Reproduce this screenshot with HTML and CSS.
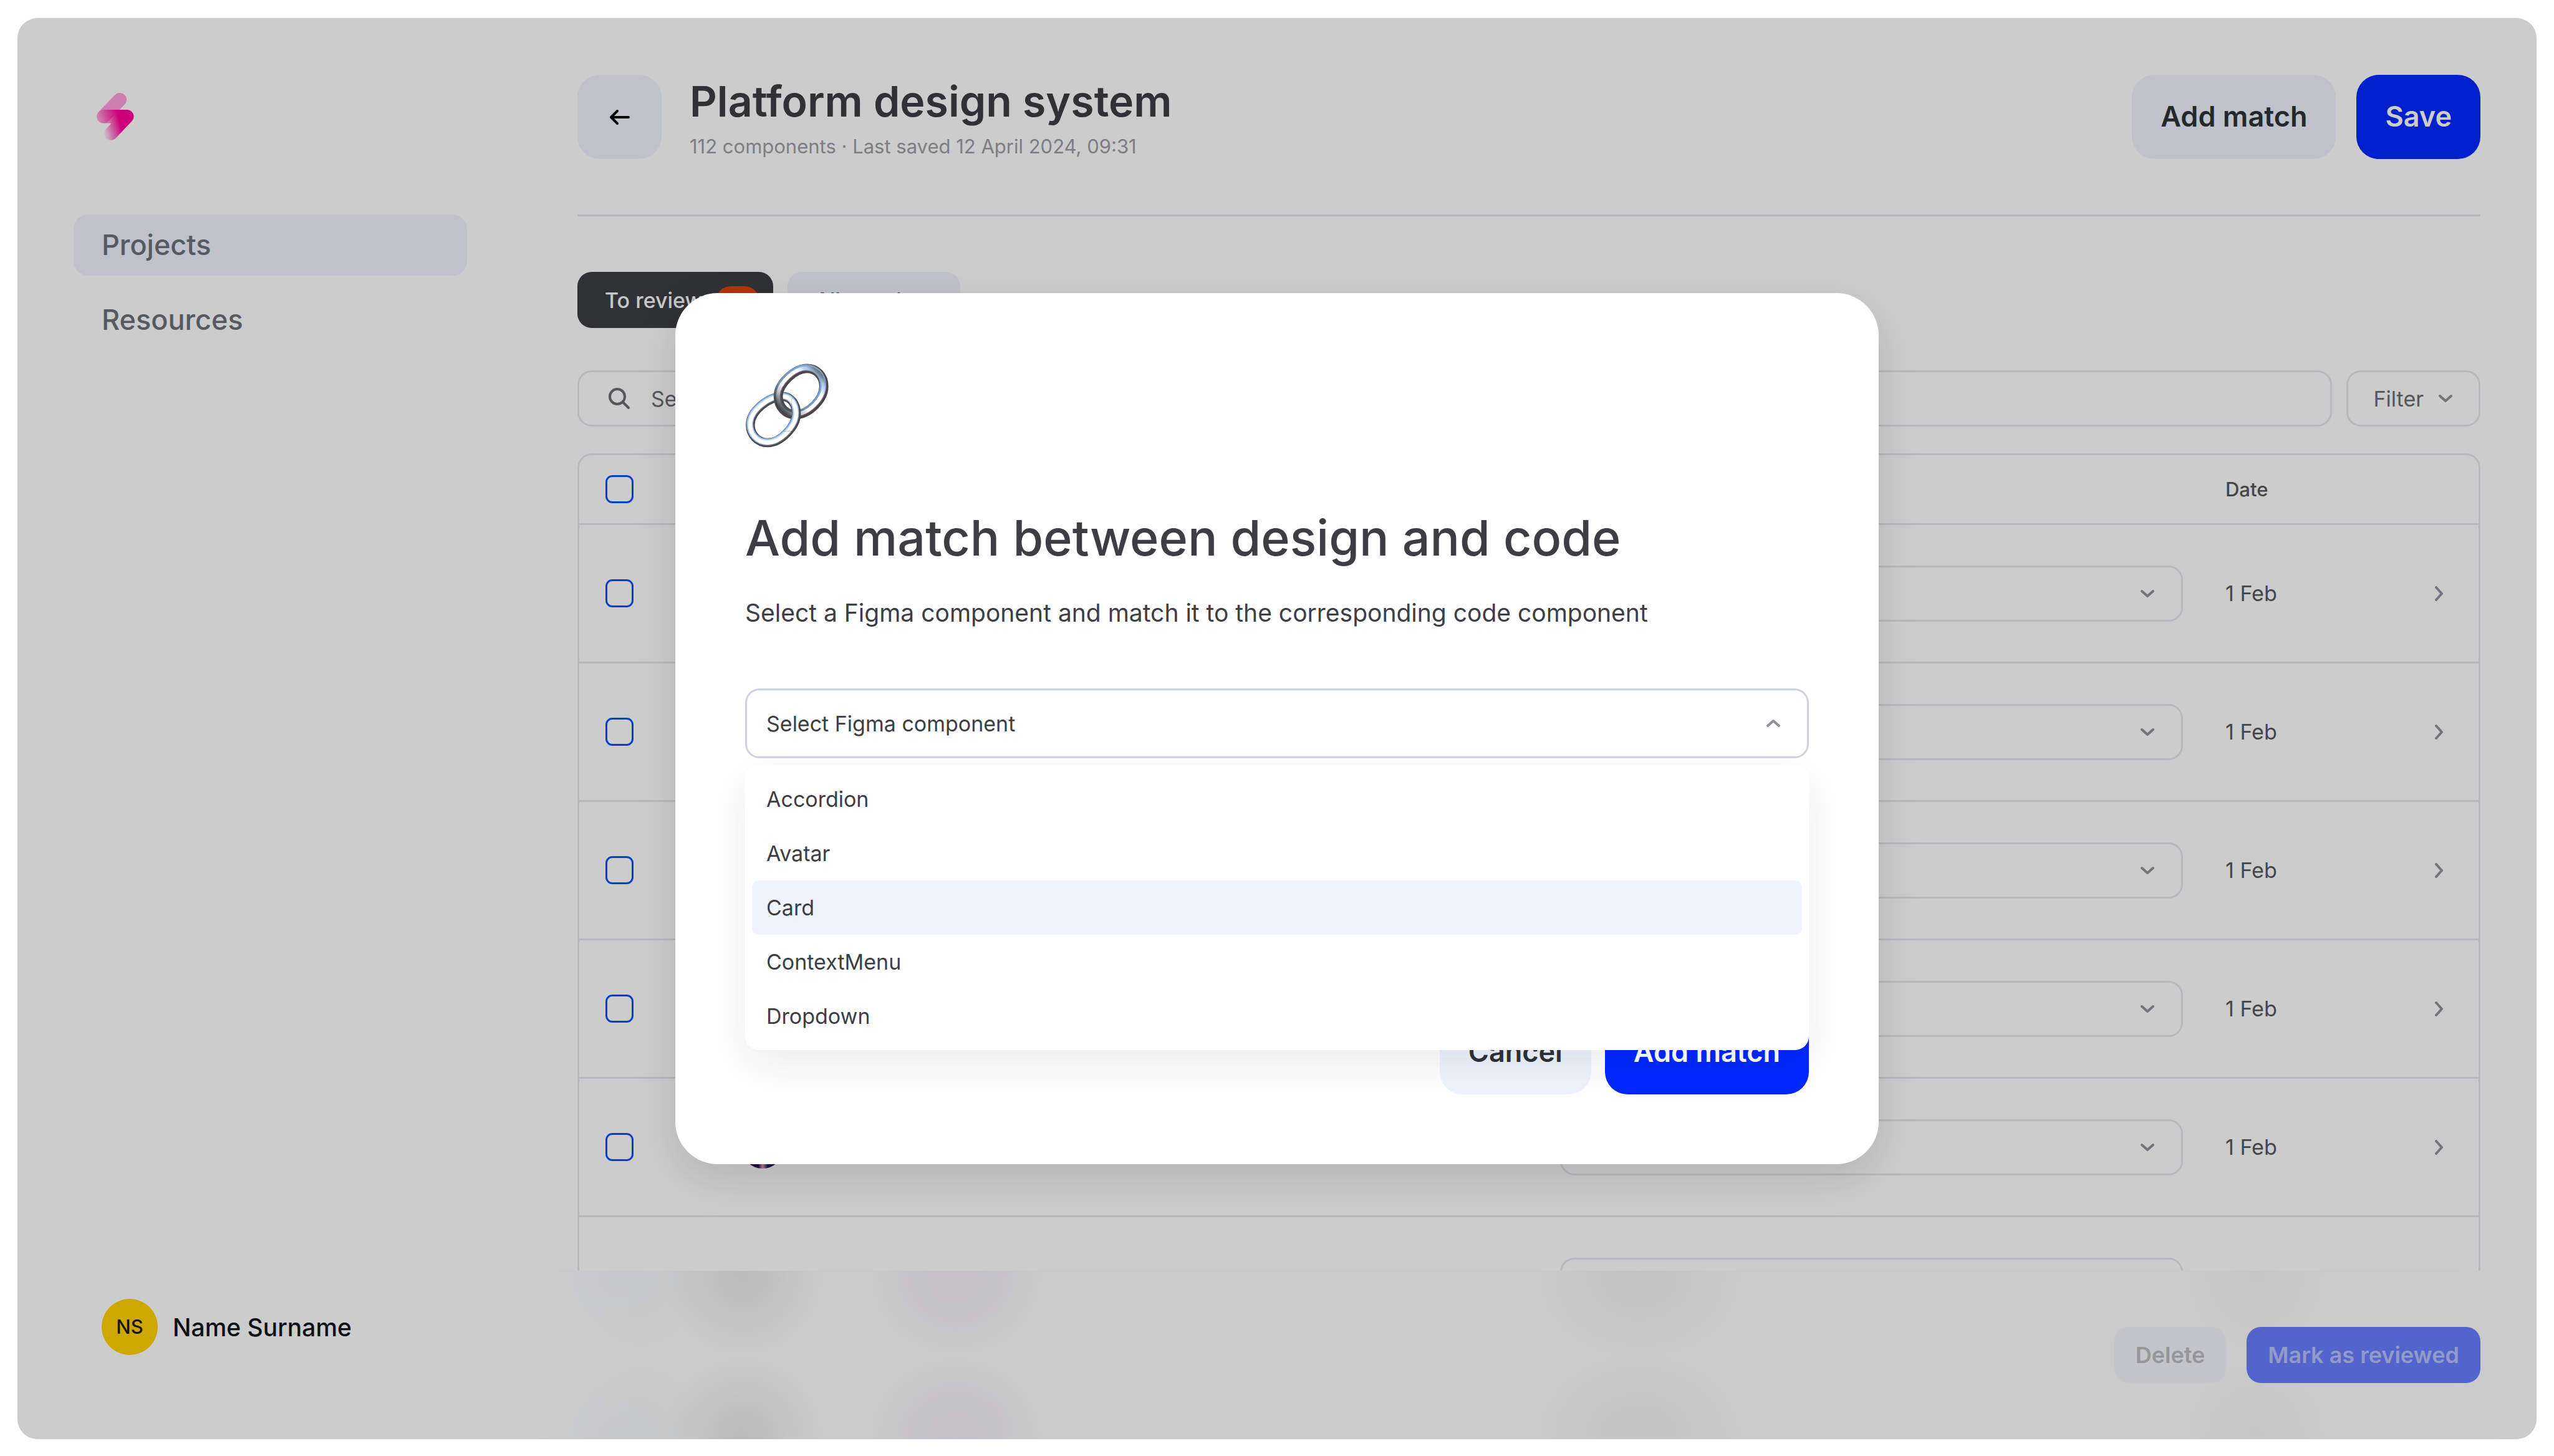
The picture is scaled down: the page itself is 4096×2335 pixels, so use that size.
FILE: index.html
```html
<!DOCTYPE html>
<html lang="en">
<head>
<meta charset="utf-8">
<title>Platform design system</title>
<link rel="stylesheet" href="styles.css">
</head>
<body>
<svg class="sprite" aria-hidden="true">
  <symbol id="chevron-down" viewBox="0 0 24 14"><path d="M3 3l9 8 9-8" fill="none" stroke="currentColor" stroke-width="4" stroke-linecap="round" stroke-linejoin="round"/></symbol>
  <symbol id="chevron-right" viewBox="0 0 17 24"><path d="M4 2l9 10-9 10" fill="none" stroke="currentColor" stroke-width="4" stroke-linecap="round" stroke-linejoin="round"/></symbol>
</svg>
<div class="app">
  <aside class="sidebar">
    <svg class="logo" viewBox="45 55 203 259" role="img" aria-label="Logo">
      <defs>
        <linearGradient id="bolt" gradientUnits="userSpaceOnUse" x1="58" y1="200" x2="160" y2="172">
          <stop offset="0" stop-color="#ff0097" stop-opacity="0"/>
          <stop offset="1" stop-color="#ff0097"/>
        </linearGradient>
      </defs>
      <path d="M171 92L82 184" fill="none" stroke="#ff9fda" stroke-width="74" stroke-linecap="round"/>
      <path d="M82 184H210L122 277" fill="none" stroke="url(#bolt)" stroke-width="74" stroke-linecap="round" stroke-linejoin="round"/>
    </svg>
    <nav class="nav">
      <a class="nav-link active" href="#">Projects</a>
      <a class="nav-link" href="#">Resources</a>
    </nav>
    <div class="user">
      <span class="avatar">NS</span>
      <span class="user-name">Name Surname</span>
    </div>
  </aside>

  <main class="main">
    <div class="content">
      <header class="page-head">
        <button class="btn back" aria-label="Back">
          <svg width="33" height="26" viewBox="0 0 33 26"><path d="M31 13H3M13 3L3 13l10 10" fill="none" stroke="#000" stroke-width="4" stroke-linecap="round" stroke-linejoin="round"/></svg>
        </button>
        <div class="titles">
          <h1>Platform design system</h1>
          <p>112 components · Last saved 12 April 2024, 09:31</p>
        </div>
        <div class="head-actions">
          <button class="btn soft">Add match</button>
          <button class="btn primary">Save</button>
        </div>
      </header>

      <div class="tabs">
        <button class="tab current">To review <span class="badge">12</span></button>
        <button class="tab">All matches</button>
      </div>

      <div class="tools">
        <label class="search">
          <svg width="36" height="36" viewBox="0 0 36 36"><g fill="none" stroke="currentColor" stroke-width="4" stroke-linecap="round"><circle cx="15" cy="15" r="12"/><path d="M24 24l9 9"/></g></svg>
          <input type="search" placeholder="Search" aria-label="Search">
        </label>
        <button class="filter">Filter <svg width="24" height="14"><use href="#chevron-down"/></svg></button>
      </div>

      <div class="table-wrap">
        <table>
          <colgroup><col class="c-check"><col><col class="c-code"><col class="c-date"><col class="c-open"></colgroup>
          <thead>
            <tr><th class="pick"><input type="checkbox" aria-label="Select all"></th><th></th><th></th><th>Date</th><th></th></tr>
          </thead>
          <tbody>
            <tr><td class="pick"><input type="checkbox" aria-label="Select row 1"></td><td><span class="thumb"></span></td><td><div class="picker"><select aria-label="Code component 1"><option></option></select><svg width="24" height="14"><use href="#chevron-down"/></svg></div></td><td>1 Feb</td><td class="open"><a href="#" aria-label="Open row 1"><svg width="17" height="24"><use href="#chevron-right"/></svg></a></td></tr>
            <tr><td class="pick"><input type="checkbox" aria-label="Select row 2"></td><td><span class="thumb"></span></td><td><div class="picker"><select aria-label="Code component 2"><option></option></select><svg width="24" height="14"><use href="#chevron-down"/></svg></div></td><td>1 Feb</td><td class="open"><a href="#" aria-label="Open row 2"><svg width="17" height="24"><use href="#chevron-right"/></svg></a></td></tr>
            <tr><td class="pick"><input type="checkbox" aria-label="Select row 3"></td><td><span class="thumb"></span></td><td><div class="picker"><select aria-label="Code component 3"><option></option></select><svg width="24" height="14"><use href="#chevron-down"/></svg></div></td><td>1 Feb</td><td class="open"><a href="#" aria-label="Open row 3"><svg width="17" height="24"><use href="#chevron-right"/></svg></a></td></tr>
            <tr><td class="pick"><input type="checkbox" aria-label="Select row 4"></td><td><span class="thumb"></span></td><td><div class="picker"><select aria-label="Code component 4"><option></option></select><svg width="24" height="14"><use href="#chevron-down"/></svg></div></td><td>1 Feb</td><td class="open"><a href="#" aria-label="Open row 4"><svg width="17" height="24"><use href="#chevron-right"/></svg></a></td></tr>
            <tr><td class="pick"><input type="checkbox" aria-label="Select row 5"></td><td><span class="thumb"></span></td><td><div class="picker"><select aria-label="Code component 5"><option></option></select><svg width="24" height="14"><use href="#chevron-down"/></svg></div></td><td>1 Feb</td><td class="open"><a href="#" aria-label="Open row 5"><svg width="17" height="24"><use href="#chevron-right"/></svg></a></td></tr>
            <tr><td></td><td></td><td><div class="picker"><select aria-label="Code component 6"><option></option></select></div></td><td></td><td></td></tr>
          </tbody>
        </table>
      </div>
    </div>

    <footer class="bulk-bar">
      <button class="btn small soft" disabled>Delete</button>
      <button class="btn small primary" disabled>Mark as reviewed</button>
    </footer>
  </main>

  <div class="overlay">
    <section class="modal" role="dialog" aria-modal="true" aria-labelledby="modal-title">
      <svg class="chain" viewBox="42 512 454 458" role="img" aria-label="Link">
        <defs>
          <path id="ring-a" d="M377 539C432 539 470 580 470 637C470 710 385 790 315 790C262 790 222 748 222 690C222 622 312 539 377 539Z"/>
          <path id="ring-b" d="M246 692C292 692 320 735 320 785C320 855 235 943 165 943C110 943 70 900 70 845C70 770 170 692 246 692Z"/>
          <linearGradient id="sheen-a" gradientUnits="userSpaceOnUse" x1="245" y1="765" x2="455" y2="560">
            <stop offset="0" stop-color="#4a4f52"/><stop offset=".2" stop-color="#c5cacf"/><stop offset=".35" stop-color="#fff"/><stop offset=".7" stop-color="#fff"/><stop offset=".88" stop-color="#a9c4e4"/><stop offset="1" stop-color="#5c5f68"/>
          </linearGradient>
          <linearGradient id="blue-a" gradientUnits="userSpaceOnUse" x1="245" y1="765" x2="455" y2="560">
            <stop offset="0" stop-color="#3d4245"/><stop offset=".3" stop-color="#7391b0"/><stop offset=".8" stop-color="#7aa9de"/><stop offset="1" stop-color="#7f9dc2"/>
          </linearGradient>
          <g id="metal-b" fill="none">
            <use href="#ring-b" stroke="#44494b" stroke-width="49"/>
            <use href="#ring-b" stroke="#6b5352" stroke-width="37" x="-1" y="-1"/>
            <use href="#ring-b" stroke="#7ba6d4" stroke-width="37" x="-3" y="-5"/>
            <use href="#ring-b" stroke="#c3daf1" stroke-width="29" x="-2" y="-3"/>
            <use href="#ring-b" stroke="#fff" stroke-width="20" x="-1" y="-1"/>
          </g>
          <clipPath id="front-b"><path d="M294 700H360V880H250V830L296 800Z"/></clipPath>
        </defs>
        <use href="#metal-b"/>
        <g fill="none">
          <use href="#ring-a" stroke="#44474a" stroke-width="50"/>
          <use href="#ring-a" stroke="#654247" stroke-width="36" x="-1" y="-1"/>
          <use href="#ring-a" stroke="url(#blue-a)" stroke-width="34" x="-4" y="-6"/>
          <use href="#ring-a" stroke="url(#sheen-a)" stroke-width="20" x="-2" y="-2"/>
        </g>
        <use href="#metal-b" clip-path="url(#front-b)"/>
      </svg>
      <h2 id="modal-title">Add match between design and code</h2>
      <p class="lead">Select a Figma component and match it to the corresponding code component</p>
      <div class="combo">
        <button class="combo-btn" aria-haspopup="listbox" aria-expanded="true">Select Figma component
          <svg class="up" width="24" height="14"><use href="#chevron-down"/></svg>
        </button>
        <ul class="menu" role="listbox" aria-label="Figma component">
          <li role="option">Accordion</li>
          <li role="option">Avatar</li>
          <li role="option" aria-selected="true">Card</li>
          <li role="option">ContextMenu</li>
          <li role="option">Dropdown</li>
        </ul>
      </div>
      <div class="modal-actions">
        <button class="btn soft">Cancel</button>
        <button class="btn primary">Add match</button>
      </div>
    </section>
  </div>
</div>
</body>
</html>
```

FILE: styles.css
```css
* { box-sizing: border-box; }

body {
  margin: 0;
  padding: 29px 28px 27px;
  background: #fff;
  font-family: Inter, "Liberation Sans", sans-serif;
  font-size: 34px;
  color: #3d3e43;
}

h1, h2, p, ul { margin: 0; padding: 0; }
ul { list-style: none; }
a { color: inherit; text-decoration: none; }
button, input, select { font: inherit; color: inherit; margin: 0; }
button { border: 0; cursor: pointer; }
svg { display: block; flex: none; }
.sprite { position: absolute; width: 0; height: 0; }

.app {
  position: relative;
  display: flex;
  height: calc(100vh - 56px);
  border-radius: 32px;
  overflow: hidden;
}

/* Sidebar */
.sidebar {
  display: flex;
  flex-direction: column;
  width: 843px;
  flex: none;
  padding: 120px 122px 135px 90px;
}
.logo { width: 60px; height: 76px; margin: 0 0 119px 37px; }
.nav { display: flex; flex-direction: column; gap: 22px; }
.nav-link {
  padding: 0 45px;
  border-radius: 23px;
  font-size: 45px;
  line-height: 98px;
  font-weight: 500;
  color: #6c7079;
}
.nav-link.active { background: #eff3fe; }
.user { display: flex; align-items: center; gap: 24px; margin: auto 0 0 45px; }
.avatar {
  width: 90px;
  height: 90px;
  border-radius: 50%;
  background: #ffd200;
  color: #1f1a05;
  font-size: 31px;
  font-weight: 500;
  line-height: 90px;
  text-align: center;
}
.user-name { font-size: 39px; font-weight: 500; color: #131519; }

/* Main column */
.main { display: flex; flex-direction: column; flex: 1; min-width: 0; }
.content {
  display: flex;
  flex-direction: column;
  flex: 1;
  min-height: 0;
  padding: 91px 90px 0 55px;
}
.page-head {
  display: flex;
  align-items: center;
  gap: 45px;
  padding-bottom: 89px;
  border-bottom: 3px solid #e6e8f1;
}
.titles { flex: 1; display: flex; flex-direction: column; gap: 11px; }
h1 { font-size: 68px; line-height: 84px; font-weight: 600; }
.titles p { font-size: 31px; line-height: 40px; color: #9c9da7; }
.head-actions { display: flex; gap: 33px; }

.btn {
  height: 135px;
  padding: 0 46px 3px;
  border-radius: 36px;
  font-size: 45px;
  font-weight: 600;
}
.btn.soft, .btn.back { background: #eff3fe; color: #2f3236; }
.btn.primary { background: #0028ff; color: #fff; }
.btn.back { display: grid; place-items: center; width: 135px; padding: 0; }
.btn.small { height: 90px; padding: 0 34px; border-radius: 23px; font-size: 36px; }
.btn.small.soft:disabled { background: #f5f7fd; color: #bcbdc0; }
.btn.small.primary:disabled { background: #687fff; color: #b7c1fb; }

.tabs { display: flex; gap: 23px; margin-top: 89px; }
.tab {
  display: flex;
  align-items: center;
  gap: 22px;
  height: 90px;
  padding: 0 44px;
  border-radius: 23px;
  background: #eff3fe;
  font-size: 34px;
  font-weight: 500;
}
.tab.current { padding-right: 23px; background: #3d3e43; color: #fafafa; }
.badge {
  width: 68px;
  border-radius: 23px;
  background: #e63d0e;
  font-size: 31px;
  line-height: 45px;
  text-align: center;
}

.tools { display: flex; gap: 23px; margin-top: 68px; color: #6a6c72; }
.search, .filter {
  display: flex;
  align-items: center;
  height: 90px;
  border: 3px solid #e6e8f1;
  border-radius: 23px;
  background: none;
}
.search { flex: 1; gap: 33px; padding: 0 46px; }
.search input { flex: 1; border: 0; padding: 0; background: none; outline: 0; }
.search input::placeholder { color: #6a6c72; }
.filter { gap: 23px; padding: 0 41px; }
.filter svg, .picker svg, .open svg { color: #90919b; }

/* Table of components; rows run on under the bulk bar */
.table-wrap {
  flex: 1;
  min-height: 0;
  margin-top: 43px;
  overflow: hidden;
  border: 3px solid #e6e8f1;
  border-bottom: 0;
  border-radius: 23px 23px 0 0;
}
table { width: 100%; border-collapse: separate; border-spacing: 0; table-layout: fixed; }
.c-check { width: 260px; }
.c-code { width: 1067px; }
.c-date { width: 279px; }
.c-open { width: 127px; }
th, td { padding: 0; border-bottom: 3px solid #e6e8f1; text-align: left; vertical-align: middle; }
th { height: 112px; font-size: 31px; font-weight: 500; color: #56575b; }
td { height: 222px; color: #56575b; }
.pick { padding-left: 42px; }
input[type="checkbox"] {
  display: block;
  appearance: none;
  width: 45px;
  height: 45px;
  border: 3px solid #0050ff;
  border-radius: 11px;
}
.thumb { display: block; width: 68px; height: 68px; border-radius: 50%; background: linear-gradient(90deg, #2c1050 40%, #e8a0b8 50%, #1a2458 62%); }
.picker {
  display: flex;
  align-items: center;
  width: 999px;
  height: 90px;
  padding: 0 42px 0 34px;
  border: 3px solid #e6e8f1;
  border-radius: 23px;
}
.picker select { flex: 1; appearance: none; border: 0; background: none; outline: 0; }
.open svg { margin: 0 auto; }

.bulk-bar {
  display: flex;
  justify-content: flex-end;
  gap: 33px;
  flex: none;
  padding: 90px;
  background:
    radial-gradient(130px 130px at 320px 8px, rgba(0,0,0,.08), rgba(0,0,0,.06) 30%, rgba(0,0,0,.025) 65%, transparent),
    radial-gradient(130px 130px at 320px 266px, rgba(0,0,0,.08), rgba(0,0,0,.06) 30%, rgba(0,0,0,.025) 65%, transparent),
    radial-gradient(140px 130px at 662px 8px, rgba(90,20,160,.05), rgba(90,20,160,.035) 45%, transparent),
    radial-gradient(140px 130px at 662px 266px, rgba(90,20,160,.05), rgba(90,20,160,.035) 45%, transparent),
    radial-gradient(170px 140px at 1758px 8px, rgba(0,0,0,.035), rgba(0,0,0,.015) 55%, transparent),
    radial-gradient(170px 140px at 1758px 266px, rgba(0,0,0,.035), rgba(0,0,0,.015) 55%, transparent),
    radial-gradient(120px 130px at 2746px 8px, rgba(0,0,0,.02), transparent),
    radial-gradient(120px 130px at 2746px 266px, rgba(0,0,0,.02), transparent),
    radial-gradient(150px 130px at 130px 8px, rgba(0,90,200,.025), transparent),
    radial-gradient(150px 130px at 130px 266px, rgba(0,90,200,.025), transparent),
    linear-gradient(90deg, #fff, #fdfdfd 5%, #fdfdfd 95%, #fff);
}

/* Modal */
.overlay {
  position: absolute;
  inset: 0;
  display: grid;
  place-items: center;
  background: rgba(0, 0, 0, .2);
}
.modal {
  width: 1930px;
  max-width: 90%;
  padding: 113px 112px 112px;
  border-radius: 68px;
  background: #fff;
  box-shadow: 0 23px 68px rgba(0, 0, 0, .12);
}
.chain { width: 134px; height: 135px; }
h2 { margin-top: 88px; font-size: 79px; line-height: 112px; font-weight: 500; }
.lead { margin-top: 37px; font-size: 39px; line-height: 56px; }
.combo { position: relative; margin-top: 93px; }
.combo-btn {
  display: flex;
  align-items: center;
  justify-content: space-between;
  width: 100%;
  height: 112px;
  padding: 0 42px 0 31px;
  border: 3px solid #d0d3de;
  border-radius: 23px;
  background: none;
}
.up { transform: scaleY(-1); color: #90919b; }
.menu {
  position: absolute;
  top: 100%;
  left: 0;
  right: 0;
  margin-top: 11px;
  padding: 11px;
  border-radius: 22px;
  background: #fff;
  box-shadow: 0 23px 68px rgba(0, 0, 0, .08);
}
.menu li { padding: 0 23px; border-radius: 11px; line-height: 87px; }
.menu li[aria-selected="true"] { background: #eff3fc; }
.modal-actions { display: flex; justify-content: flex-end; gap: 22px; margin-top: 404px; }
```
